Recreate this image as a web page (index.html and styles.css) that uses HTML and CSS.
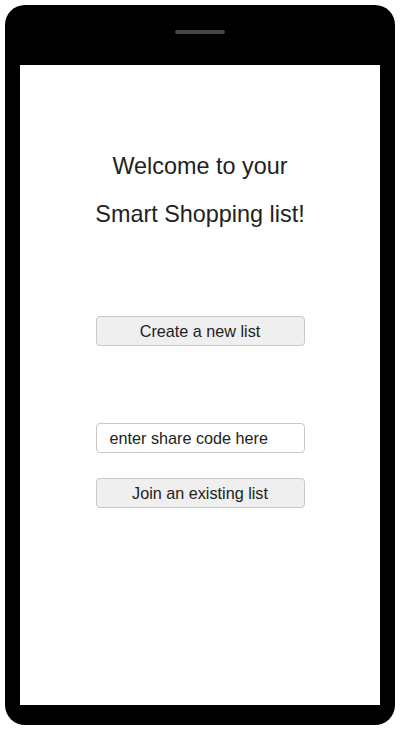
FILE: index.html
```html
<!DOCTYPE html>
<html lang="en">
<head>
<meta charset="utf-8">
<title>Smart Shopping list</title>
<link rel="stylesheet" href="styles.css">
</head>
<body>
<div class="phone">
  <div class="bezel-top"><span class="speaker"></span></div>
  <main class="screen">
    <h1 class="title">Welcome to your<br>Smart Shopping list!</h1>
    <button class="btn btn-create" type="button">Create a new list</button>
    <div class="join">
      <input class="code-input" type="text" placeholder="enter share code here">
      <button class="btn" type="button">Join an existing list</button>
    </div>
  </main>
</div>
</body>
</html>
```
FILE: styles.css
```css
* { box-sizing: border-box; }
html, body { margin: 0; padding: 0; background: #fff; }
body { font-family: "Liberation Sans", Arial, sans-serif; color: #222; }

.phone {
  margin: 5px;
  width: 390px;
  height: 720px;
  background: #000;
  border-radius: 20px;
  padding: 0 15px 20px;
  display: flex;
  flex-direction: column;
}
.bezel-top {
  height: 60px;
  display: flex;
  justify-content: center;
  padding-top: 25px;
}
.speaker {
  width: 50px;
  height: 4px;
  border-radius: 2px;
  background: #444;
}
.screen {
  flex: 1;
  background: #fff;
  display: flex;
  flex-direction: column;
  align-items: center;
  padding-top: 77px;
}
.title {
  margin: 0;
  font-size: 23.4px;
  font-weight: normal;
  line-height: 48px;
  text-align: center;
  color: #222;
}
.btn, .code-input {
  width: 209px;
  height: 30px;
  font-family: "Liberation Sans", Arial, sans-serif;
  font-size: 16.2px;
  color: #222;
  border: 1px solid #c8c8c8;
  border-radius: 4px;
  margin: 0;
}
.btn {
  background: #efefef;
  padding: 0;
}
.btn-create { margin-top: 78px; }
.join {
  margin-top: 77px;
  display: flex;
  flex-direction: column;
  gap: 25px;
}
.code-input {
  background: #fff;
  padding: 0 13px;
}
.code-input::placeholder { color: #222; opacity: 1; }
```
